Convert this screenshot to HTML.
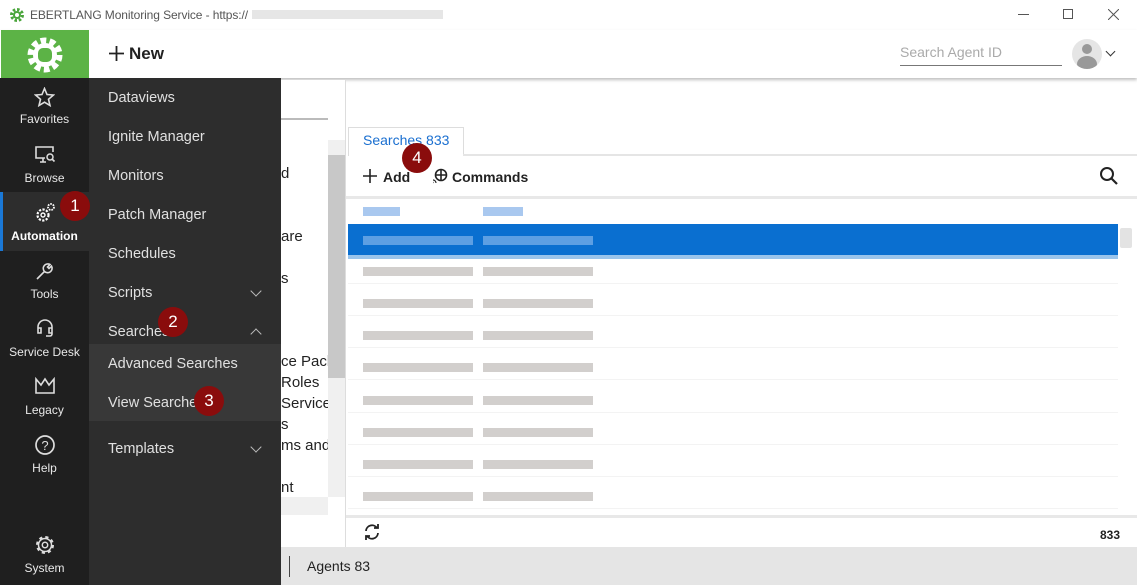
<!DOCTYPE html>
<html><head><meta charset="utf-8"><style>
*{margin:0;padding:0;box-sizing:border-box}
body{width:1137px;height:585px;position:relative;overflow:hidden;background:#fff;font-family:"Liberation Sans",sans-serif}
.abs{position:absolute}
.rail{left:0;top:78px;width:89px;height:507px;background:#1f1f1f}
.ri{position:absolute;left:0;width:89px;text-align:center;color:#e8e8e8;font-size:12px}
.sub{left:89px;top:78px;width:192px;height:507px;background:#2d2d2d}
.si{position:absolute;left:19px;color:#e0e0e0;font-size:14.5px}
.chev{position:absolute;left:163px;width:8px;height:8px;border-right:1.3px solid #bbb;border-bottom:1.3px solid #bbb}
.badge{position:absolute;width:30px;height:30px;border-radius:50%;background:#8a0c0c;color:#fff;font-size:17px;text-align:center;line-height:30px}
.bar{position:absolute;height:9px}
</style></head><body>
<!-- title bar -->
<div class="abs" style="left:0;top:0;width:1137px;height:30px;background:#fff"></div>
<svg class="abs" style="left:9px;top:7px" width="16" height="16" viewBox="0 0 16 16"><circle cx="8" cy="8" r="5.5" fill="none" stroke="#4aa53b" stroke-width="3" stroke-dasharray="2.5 1.8"/><circle cx="8" cy="8" r="4" fill="#4aa53b"/><circle cx="8" cy="8" r="2" fill="#fff"/></svg>
<div class="abs" style="left:30px;top:8px;font-size:12px;color:#555;letter-spacing:-0.1px">EBERTLANG Monitoring Service - https://</div>
<div class="abs" style="left:252px;top:10px;width:191px;height:9px;background:#e6e6e6"></div>
<div class="abs" style="left:1018px;top:14px;width:11px;height:1px;background:#555"></div>
<div class="abs" style="left:1063px;top:9px;width:10px;height:10px;border:1px solid #555"></div>
<svg class="abs" style="left:1108px;top:9px" width="11" height="11" viewBox="0 0 11 11"><path d="M0 0L11 11M11 0L0 11" stroke="#555" stroke-width="1"/></svg>
<!-- header -->
<div class="abs" style="left:0;top:30px;width:1137px;height:48px;background:#fff;box-shadow:0 2px 3px rgba(0,0,0,.25)"></div>
<div class="abs" style="left:1px;top:30px;width:88px;height:48px;background:#5cb346"></div>
<svg class="abs" style="left:24px;top:34px" width="42" height="42" viewBox="0 0 42 42"><circle cx="21" cy="21" r="14" fill="none" stroke="#fff" stroke-width="7" stroke-dasharray="5.5 3.3"/><circle cx="21" cy="21" r="12" fill="#fff"/><rect x="14" y="14" width="14" height="14" rx="5" fill="#5cb346"/></svg>
<svg class="abs" style="left:109px;top:46px" width="15" height="15" viewBox="0 0 15 15"><path d="M7.5 0V15M0 7.5H15" stroke="#222" stroke-width="1.8"/></svg>
<div class="abs" style="left:129px;top:44px;font-size:17px;font-weight:bold;color:#222">New</div>
<div class="abs" style="left:900px;top:44px;font-size:14px;color:#aaa">Search Agent ID</div>
<div class="abs" style="left:900px;top:65px;width:162px;height:1px;background:#777"></div>
<div class="abs" style="left:1072px;top:39px;width:30px;height:30px;border-radius:50%;background:#e5e5e5;overflow:hidden"><div class="abs" style="left:10px;top:5px;width:10px;height:10px;border-radius:50%;background:#999"></div><div class="abs" style="left:5px;top:17px;width:20px;height:16px;border-radius:50%;background:#999"></div></div>
<div class="abs" style="left:1107px;top:48px;width:7px;height:7px;border-right:1.3px solid #333;border-bottom:1.3px solid #333;transform:rotate(45deg)"></div>
<!-- background middle panel -->
<div class="abs" style="left:281px;top:80px;width:65px;height:467px;background:#fff"></div>
<div class="abs" style="left:281px;top:118px;width:47px;height:2px;background:#bbb"></div>
<div class="abs" style="left:281px;top:140px;width:47px;height:360px;overflow:hidden">
<div class="abs" style="left:0;top:23px;font-size:15px;color:#222;line-height:21px;white-space:pre">d


are

s</div>
<div class="abs" style="left:0;top:211px;font-size:15px;color:#222;line-height:21px;white-space:pre">ce Pack
Roles
Service
s
ms and

nt</div>
</div>
<div class="abs" style="left:328px;top:140px;width:17px;height:357px;background:#f0f0f0"></div>
<div class="abs" style="left:328px;top:155px;width:17px;height:223px;background:#c8c8c8"></div>
<div class="abs" style="left:281px;top:497px;width:47px;height:18px;background:#f0f0f0"></div>
<div class="abs" style="left:345px;top:80px;width:1px;height:467px;background:#ddd"></div>
<!-- right panel -->
<div class="abs" style="left:348px;top:127px;width:116px;height:29px;border:1px solid #ddd;border-bottom:none;background:#fff"></div>
<div class="abs" style="left:463px;top:154px;width:674px;height:2px;background:#e5e5e5"></div>
<div class="abs" style="left:363px;top:132px;font-size:14px;color:#1a6fd0">Searches 833</div>
<svg class="abs" style="left:363px;top:169px" width="14" height="14" viewBox="0 0 14 14"><path d="M7 0V14M0 7H14" stroke="#222" stroke-width="1.6"/></svg>
<div class="abs" style="left:383px;top:169px;font-size:14px;font-weight:bold;color:#222">Add</div>
<svg class="abs" style="left:432px;top:168px" width="16" height="16" viewBox="0 0 16 16"><circle cx="9" cy="7" r="5.5" fill="none" stroke="#222" stroke-width="1.6"/><path d="M9 1.5V12.5M3.5 7H14.5" stroke="#222" stroke-width="1.6"/><path d="M1 12a3 3 0 0 1 3 3M1 14.5h.5" stroke="#222" stroke-width="1.2" fill="none"/></svg>
<div class="abs" style="left:452px;top:169px;font-size:14px;font-weight:bold;color:#222">Commands</div>
<svg class="abs" style="left:1099px;top:166px" width="20" height="20" viewBox="0 0 20 20"><circle cx="8" cy="8" r="6" fill="none" stroke="#222" stroke-width="2"/><path d="M12.5 12.5L18 18" stroke="#222" stroke-width="2.2"/></svg>
<div class="abs" style="left:346px;top:196px;width:791px;height:3px;background:#e8e8e8"></div>
<div class="bar" style="left:363px;top:207px;width:37px;background:#a9c8ef"></div>
<div class="bar" style="left:483px;top:207px;width:40px;background:#a9c8ef"></div>
<div class="abs" style="left:348px;top:224px;width:770px;height:31px;background:#0a6fd0"></div>
<div class="abs" style="left:348px;top:255px;width:770px;height:4px;background:#9ac4eb"></div>
<div class="bar" style="left:363px;top:236px;width:110px;background:#5d9fe3"></div>
<div class="bar" style="left:483px;top:236px;width:110px;background:#5d9fe3"></div>
<div class="abs" style="left:1120px;top:228px;width:12px;height:20px;background:#e3e3e3;border-radius:2px"></div>
<div id="rows"></div>
<script>
var ys=[271,303,335,367,400,432,464,496],h='';
ys.forEach(function(y){h+='<div class="bar" style="left:363px;top:'+(y-4)+'px;width:110px;background:#d2cfcd"></div><div class="bar" style="left:483px;top:'+(y-4)+'px;width:110px;background:#d2cfcd"></div><div class="abs" style="left:348px;top:'+(y+12)+'px;width:770px;height:1px;background:#f3f3f3"></div>';});
document.getElementById('rows').innerHTML=h;
</script>
<div class="abs" style="left:346px;top:515px;width:791px;height:3px;background:#e8e8e8"></div>
<svg class="abs" style="left:363px;top:523px" width="18" height="18" viewBox="0 0 18 18"><path d="M3 8A6 6 0 0 1 14 5M15 10A6 6 0 0 1 4 13" stroke="#222" stroke-width="1.8" fill="none"/><path d="M11 5h4V1M7 13H3v4" stroke="#222" stroke-width="1.8" fill="none"/></svg>
<div class="abs" style="left:1100px;top:528px;font-size:12px;font-weight:bold;color:#222">833</div>
<!-- status bar -->
<div class="abs" style="left:281px;top:547px;width:856px;height:38px;background:#e5e5e5"></div>
<div class="abs" style="left:289px;top:556px;width:1px;height:21px;background:#444"></div>
<div class="abs" style="left:307px;top:558px;font-size:14px;color:#222">Agents 83</div>
<!-- rail -->
<div class="abs rail"></div>
<div class="abs" style="left:0;top:192px;width:89px;height:59px;background:#2d2d2d;border-left:3px solid #1a78d6"></div>
<svg class="abs" style="left:34px;top:87px" width="21" height="20" viewBox="0 0 21 20"><path d="M10.5 1.5L13 7.5L19.5 8L14.5 12.3L16 18.5L10.5 15.2L5 18.5L6.5 12.3L1.5 8L8 7.5Z" stroke="#ddd" stroke-width="1.6" fill="none"/></svg>
<div class="ri" style="top:112px">Favorites</div>
<svg class="abs" style="left:34px;top:145px" width="22" height="20" viewBox="0 0 22 20"><path d="M11 13H2V2H19V7M6 17H12M9 13V17" stroke="#ddd" stroke-width="1.6" fill="none"/><circle cx="16" cy="12" r="3" stroke="#ddd" stroke-width="1.5" fill="none"/><path d="M18 14l2.5 2.5" stroke="#ddd" stroke-width="1.6"/></svg>
<div class="ri" style="top:171px">Browse</div>
<svg class="abs" style="left:34px;top:202px" width="22" height="22" viewBox="0 0 22 22"><circle cx="9" cy="13" r="5.5" stroke="#fff" stroke-width="2.2" fill="none" stroke-dasharray="2.2 1.4"/><circle cx="9" cy="13" r="2" stroke="#fff" stroke-width="1.4" fill="none"/><circle cx="17" cy="5" r="3" stroke="#fff" stroke-width="1.8" fill="none" stroke-dasharray="1.6 1"/></svg>
<div class="ri" style="top:229px;font-weight:bold;color:#fff">Automation</div>
<svg class="abs" style="left:35px;top:261px" width="20" height="20" viewBox="0 0 20 20"><path d="M2 18L9.5 10.5A4.5 4.5 0 0 1 15 3.5L12.5 6L14 7.5L16.5 5A4.5 4.5 0 0 1 9.5 10.5" stroke="#ddd" stroke-width="1.6" fill="none"/></svg>
<div class="ri" style="top:287px">Tools</div>
<svg class="abs" style="left:35px;top:318px" width="20" height="20" viewBox="0 0 20 20"><path d="M3 11V9a7 7 0 0 1 14 0v2M3 10h3v5H3zM14 10h3v5h-3zM17 15v1a2 2 0 0 1-2 2h-4" stroke="#ddd" stroke-width="1.6" fill="none"/></svg>
<div class="ri" style="top:345px">Service Desk</div>
<svg class="abs" style="left:34px;top:377px" width="22" height="18" viewBox="0 0 22 18"><path d="M2 2L7 8L11 2L15 8L20 2V16H2Z" stroke="#ddd" stroke-width="1.6" fill="none"/></svg>
<div class="ri" style="top:403px">Legacy</div>
<svg class="abs" style="left:34px;top:434px" width="22" height="22" viewBox="0 0 22 22"><circle cx="11" cy="11" r="9" stroke="#ddd" stroke-width="1.7" fill="none"/><text x="11" y="16" font-size="13" font-family="Liberation Sans" fill="#ddd" text-anchor="middle">?</text></svg>
<div class="ri" style="top:461px">Help</div>
<svg class="abs" style="left:34px;top:534px" width="22" height="22" viewBox="0 0 22 22"><circle cx="11" cy="11" r="7.5" stroke="#ddd" stroke-width="3" fill="none" stroke-dasharray="3 2.9"/><circle cx="11" cy="11" r="6.5" stroke="#ddd" stroke-width="1.5" fill="none"/><circle cx="11" cy="11" r="2.7" stroke="#ddd" stroke-width="1.5" fill="none"/></svg>
<div class="ri" style="top:561px">System</div>
<!-- submenu -->
<div class="abs sub">
<div class="si" style="top:12px">Dataviews</div>
<div class="si" style="top:51px">Ignite Manager</div>
<div class="si" style="top:90px">Monitors</div>
<div class="si" style="top:129px">Patch Manager</div>
<div class="si" style="top:168px">Schedules</div>
<div class="si" style="top:207px">Scripts</div><div class="chev" style="top:209px;transform:rotate(45deg)"></div>
<div class="si" style="top:246px">Searches</div><div class="chev" style="top:252px;transform:rotate(-135deg)"></div>
<div class="abs" style="left:0;top:266px;width:192px;height:77px;background:#383838"></div>
<div class="si" style="top:278px">Advanced Searches</div>
<div class="si" style="top:317px">View Searches</div>
<div class="si" style="top:363px">Templates</div><div class="chev" style="top:365px;transform:rotate(45deg)"></div>
</div>
<div class="badge" style="left:60px;top:191px">1</div>
<div class="badge" style="left:158px;top:307px">2</div>
<div class="badge" style="left:194px;top:386px">3</div>
<div class="badge" style="left:402px;top:143px">4</div>
</body></html>
